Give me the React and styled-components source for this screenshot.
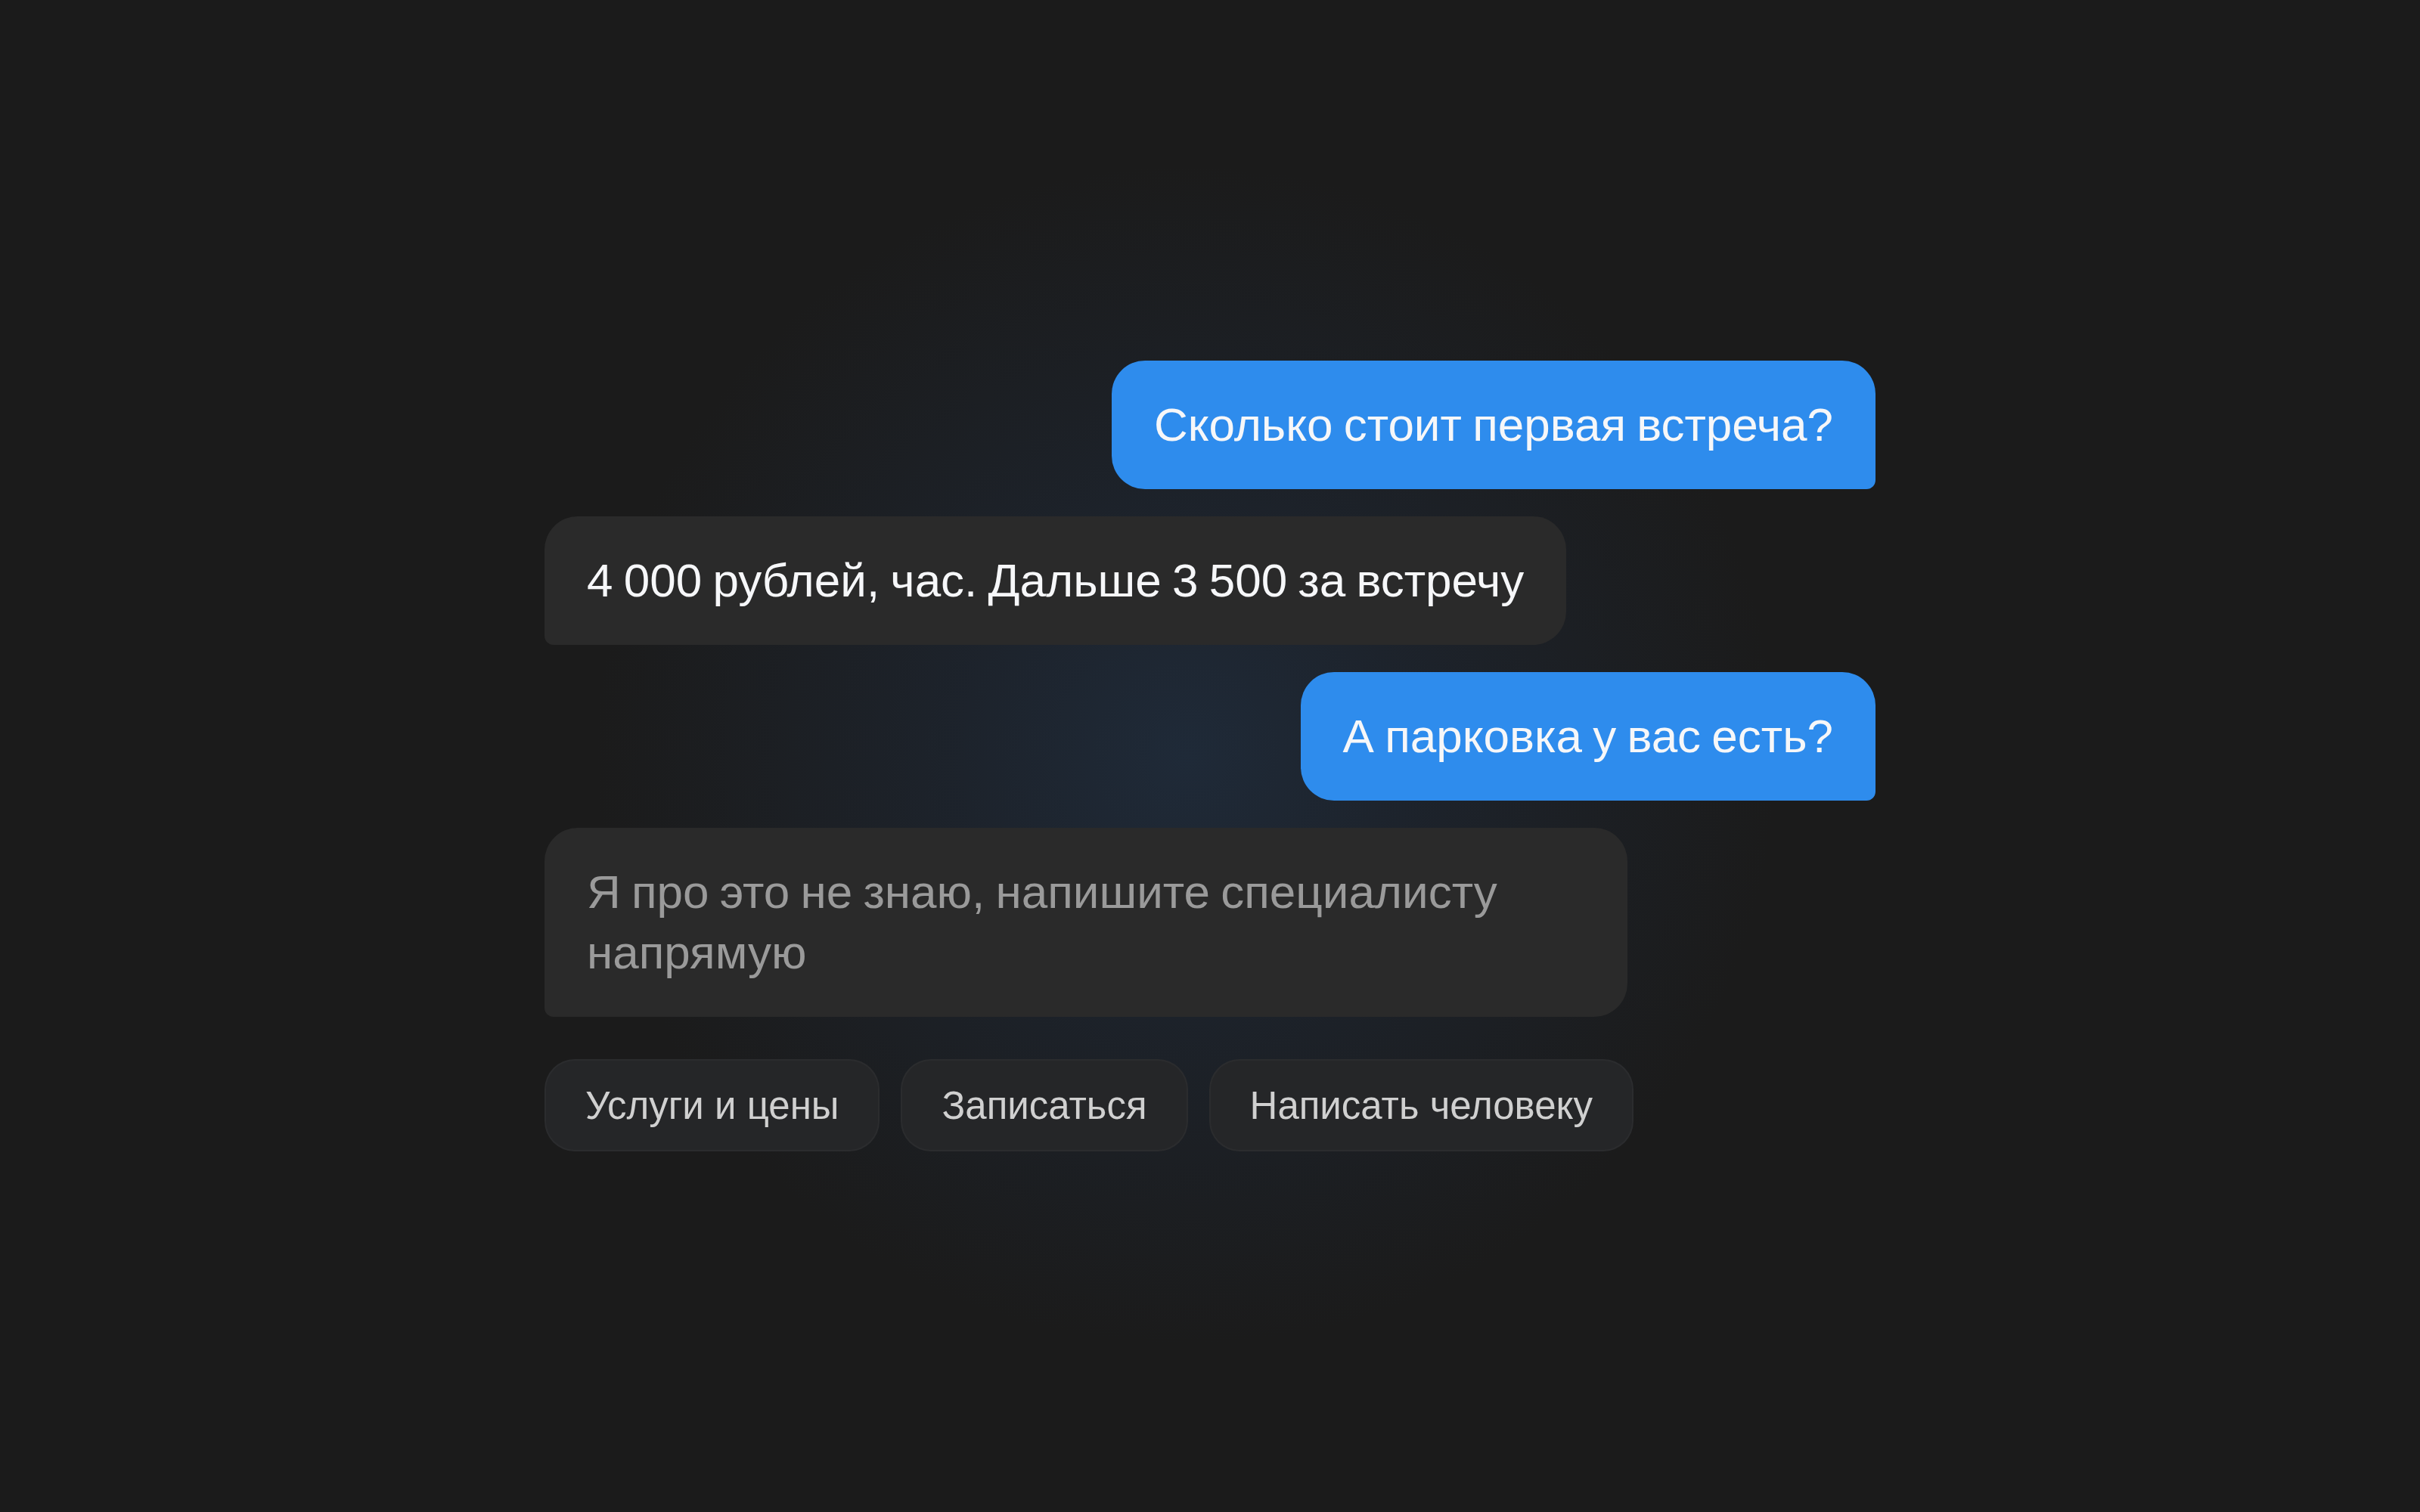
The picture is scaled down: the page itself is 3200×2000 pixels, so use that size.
import React from "react";
import styled, { createGlobalStyle } from "styled-components";

const GlobalStyle = createGlobalStyle`
  html, body, #root {
    margin: 0;
    padding: 0;
    height: 100%;
  }
  body {
    background: #1b1b1b;
    font-family: "Liberation Sans", Arial, sans-serif;
  }
`;

const Page = styled.main`
  width: 3200px;
  height: 2000px;
  display: flex;
  align-items: center;
  justify-content: center;
  background:
    radial-gradient(circle 780px at 49% 50%, rgba(31, 42, 56, 1) 0%, rgba(29, 36, 46, 0.85) 40%, rgba(27, 27, 27, 0) 100%),
    #1b1b1b;
`;

const Chat = styled.section`
  width: 1760px;
  display: flex;
  flex-direction: column;
  gap: 36px;
`;

const Bubble = styled.div`
  box-sizing: border-box;
  max-width: 1432px;
  padding: 45px 56px;
  font-size: 62px;
  line-height: 80px;
  word-spacing: -3px;
  align-self: ${(p) => (p.$out ? "flex-end" : "flex-start")};
  background: ${(p) => (p.$out ? "#2e8ced" : "#2a2a2a")};
  color: ${(p) => (p.$muted ? "#9a9a9a" : "#f6f7f9")};
  border-radius: ${(p) => (p.$out ? "44px 44px 12px 44px" : "44px 44px 44px 12px")};
`;

const Chips = styled.div`
  display: flex;
  gap: 28px;
  margin-top: 20px;
`;

const Chip = styled.button`
  box-sizing: border-box;
  height: 122px;
  padding: 0 52px;
  font-family: "Liberation Sans", Arial, sans-serif;
  font-size: 51px;
  color: #d0d0d0;
  background: #252628;
  border: 2px solid rgba(255, 255, 255, 0.03);
  border-radius: 40px;
  cursor: pointer;
`;

export default function App() {
  return (
    <>
      <GlobalStyle />
      <Page>
        <Chat>
          <Bubble $out>Сколько стоит первая встреча?</Bubble>
          <Bubble>4 000 рублей, час. Дальше 3 500 за встречу</Bubble>
          <Bubble $out>А парковка у вас есть?</Bubble>
          <Bubble $muted>Я про это не знаю, напишите специалисту напрямую</Bubble>
          <Chips>
            <Chip>Услуги и цены</Chip>
            <Chip>Записаться</Chip>
            <Chip>Написать человеку</Chip>
          </Chips>
        </Chat>
      </Page>
    </>
  );
}
